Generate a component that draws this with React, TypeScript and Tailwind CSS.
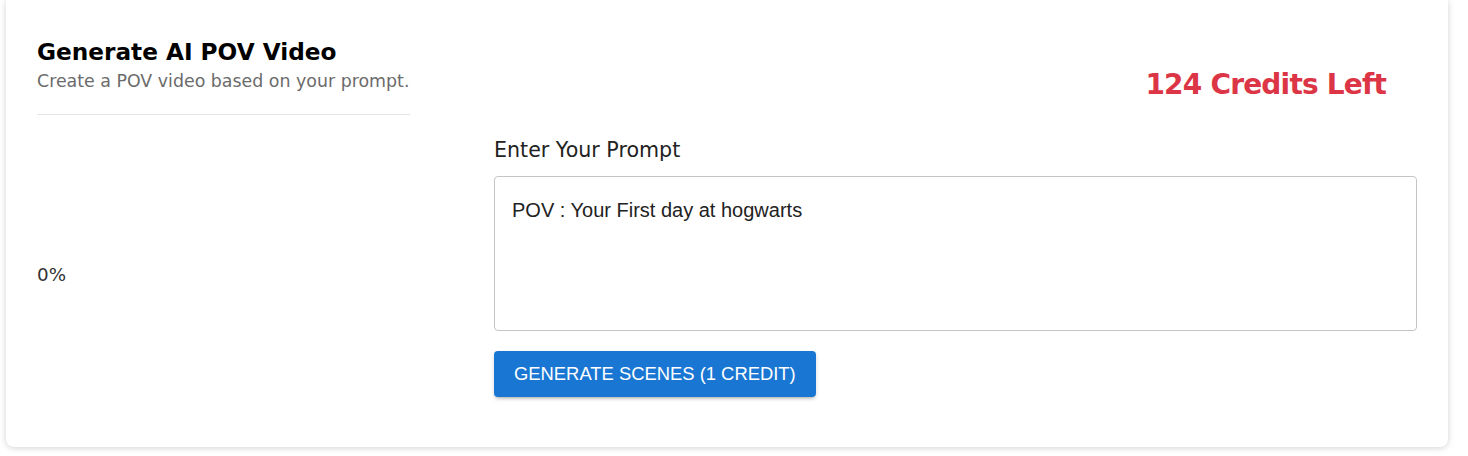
const App = () => {
  return (
    <div className="w-[1468px] h-[456px] bg-white pl-[6px] pr-[20px]" style={{ fontFamily: '"DejaVu Sans", sans-serif' }}>
      <div className="h-[447px] rounded-b-lg bg-white shadow-[0_1px_6px_rgba(0,0,0,0.18)] flex px-[31px]">
        {/* Left column */}
        <div className="w-[373px] flex flex-col">
          <h1 className="mt-[38px] text-[23.2px] leading-[28px] font-bold text-black">Generate AI POV Video</h1>
          <p className="mt-[4px] text-[17.4px] leading-[22px] text-[#6b6b6b]">Create a POV video based on your prompt.</p>
          <div className="mt-[22px] h-px bg-[#e5e5e5]" />
          <div className="flex-1 flex items-center pb-[12px]">
            <span className="text-[18.3px] text-[#333]">0%</span>
          </div>
        </div>

        {/* Right column */}
        <div className="ml-[84px] flex-1 flex flex-col">
          <div className="mt-[67px] flex justify-end pr-[31px]">
            <span className="text-[28px] leading-[36px] font-bold tracking-[-0.8px] text-[#dc3545]">124 Credits Left</span>
          </div>
          <label className="mt-[35px] text-[20.6px] leading-[24px] text-[#222]">Enter Your Prompt</label>
          <div className="mt-[14px] h-[155px] rounded border border-[#c4c4c4] px-[17px] py-[18px]">
            <span className="text-[20px] text-[#222]" style={{ fontFamily: '"Liberation Sans", Arial, sans-serif' }}>
              POV : Your First day at hogwarts
            </span>
          </div>
          <div className="mt-[20px]">
            <button
              className="h-[46px] px-[20px] rounded bg-[#1976d2] text-white text-[18.4px] uppercase shadow-[0_3px_3px_-2px_rgba(0,0,0,0.2),0_2px_4px_0_rgba(0,0,0,0.14)]"
              style={{ fontFamily: '"Liberation Sans", Arial, sans-serif' }}
            >
              Generate Scenes (1 Credit)
            </button>
          </div>
        </div>
      </div>
    </div>
  );
};

export default App;
